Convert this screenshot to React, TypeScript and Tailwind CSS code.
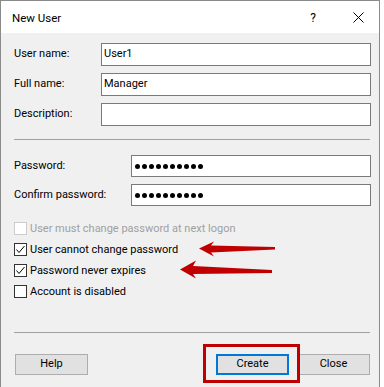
import React from "react";

function Dots() {
  return (
    <div className="flex gap-[2px] items-center">
      {Array.from({ length: 10 }).map((_, i) => (
        <div key={i} className="w-[5px] h-[5px] rounded-full bg-black" />
      ))}
    </div>
  );
}

function Check({ checked, disabled, label }: { checked?: boolean; disabled?: boolean; label: string }) {
  return (
    <div className="flex items-center h-[13px]">
      <div
        className={
          "w-[13px] h-[13px] border bg-white flex items-center justify-center " +
          (disabled ? "border-[#cccccc]" : "border-[#333333]")
        }
      >
        {checked && (
          <svg width="11" height="11" viewBox="0 0 11 11">
            <polyline points="1.5,5.5 4,8.5 9.5,2" fill="none" stroke="#000" strokeWidth="1" />
          </svg>
        )}
      </div>
      <span className={"ml-[3px] text-[11px] leading-[13px] " + (disabled ? "text-[#a0a0a0]" : "text-black")}>
        {label}
      </span>
    </div>
  );
}

export default function App() {
  return (
    <div className="relative w-[384px] h-[387px] bg-white overflow-hidden font-[Roboto,sans-serif] text-black">
      <div className="w-[380px] h-[387px] border-l border-t border-r border-[#8a8a8a] flex flex-col">
        <div className="h-[32px] bg-white flex items-center pl-[11px] pr-[15px] pt-[3px] shrink-0">
          <span className="text-[11.5px]">New User</span>
          <span className="ml-auto text-[12px] mr-[37px] -mt-[2px]">?</span>
          <svg width="11" height="11" viewBox="0 0 11 11" className="-mt-[2px]">
            <line x1="0.5" y1="0.5" x2="10.5" y2="10.5" stroke="#000" strokeWidth="1" />
            <line x1="10.5" y1="0.5" x2="0.5" y2="10.5" stroke="#000" strokeWidth="1" />
          </svg>
        </div>
        <div className="flex-1 bg-[#f0f0f0] pl-[13px] pr-[8px] pt-[10px] flex flex-col">
          <div className="flex flex-col gap-[7px]">
            <div className="flex items-center h-[23px]">
              <span className="w-[87px] text-[11px]">User name:</span>
              <div className="flex-1 h-full bg-white border border-[#7a7a7a] flex items-center pl-[2px] text-[11px]">User1</div>
            </div>
            <div className="flex items-center h-[23px]">
              <span className="w-[87px] text-[11px]">Full name:</span>
              <div className="flex-1 h-full bg-white border border-[#7a7a7a] flex items-center pl-[2px] text-[11px]">Manager</div>
            </div>
            <div className="flex items-center h-[23px]">
              <span className="w-[87px] text-[11px]">Description:</span>
              <div className="flex-1 h-full bg-white border border-[#7a7a7a]" />
            </div>
          </div>
          <div className="mt-[13px] h-px bg-[#a0a0a0] w-[356px]" />
          <div className="flex flex-col gap-[7px] mt-[15px]">
            <div className="flex items-center h-[22px]">
              <span className="w-[117px] text-[11px]">Password:</span>
              <div className="flex-1 h-full bg-white border border-[#7a7a7a] flex items-center pl-[3px]">
                <Dots />
              </div>
            </div>
            <div className="flex items-center h-[22px]">
              <span className="w-[117px] text-[11px]">Confirm password:</span>
              <div className="flex-1 h-full bg-white border border-[#7a7a7a] flex items-center pl-[3px]">
                <Dots />
              </div>
            </div>
          </div>
          <div className="flex flex-col gap-[8px] mt-[16px]">
            <Check disabled label="User must change password at next logon" />
            <Check checked label="User cannot change password" />
            <Check checked label="Password never expires" />
            <Check label="Account is disabled" />
          </div>
          <div className="mt-[34px] h-px bg-[#a0a0a0] w-[356px]" />
          <div className="mt-[21px] flex items-center">
            <button className="ml-[1px] w-[73px] h-[21px] bg-[#e1e1e1] border border-[#adadad] text-[11px]">Help</button>
            <button className="ml-auto w-[73px] h-[21px] bg-[#e1e1e1] border-2 border-[#0078d7] text-[11px]">Create</button>
            <button className="ml-[8px] mr-[1px] w-[73px] h-[21px] bg-[#e1e1e1] border border-[#adadad] text-[11px]">Close</button>
          </div>
        </div>
      </div>
      <div className="absolute left-[203px] top-[344px] w-[97px] h-[39px] border-[3px] border-[#c00000]" />
      <svg className="absolute left-0 top-0 pointer-events-none" width="384" height="387" viewBox="0 0 384 387">
        <polygon
          points="199,248.5 214,241.5 211,245.5 275,247 275,249.5 211,252.5 214,256.5"
          fill="#c00000"
        />
        <polygon
          points="180,269.5 196,260.5 193,266 272,270 272,273 193,274 196,278.5"
          fill="#c00000"
        />
      </svg>
    </div>
  );
}
